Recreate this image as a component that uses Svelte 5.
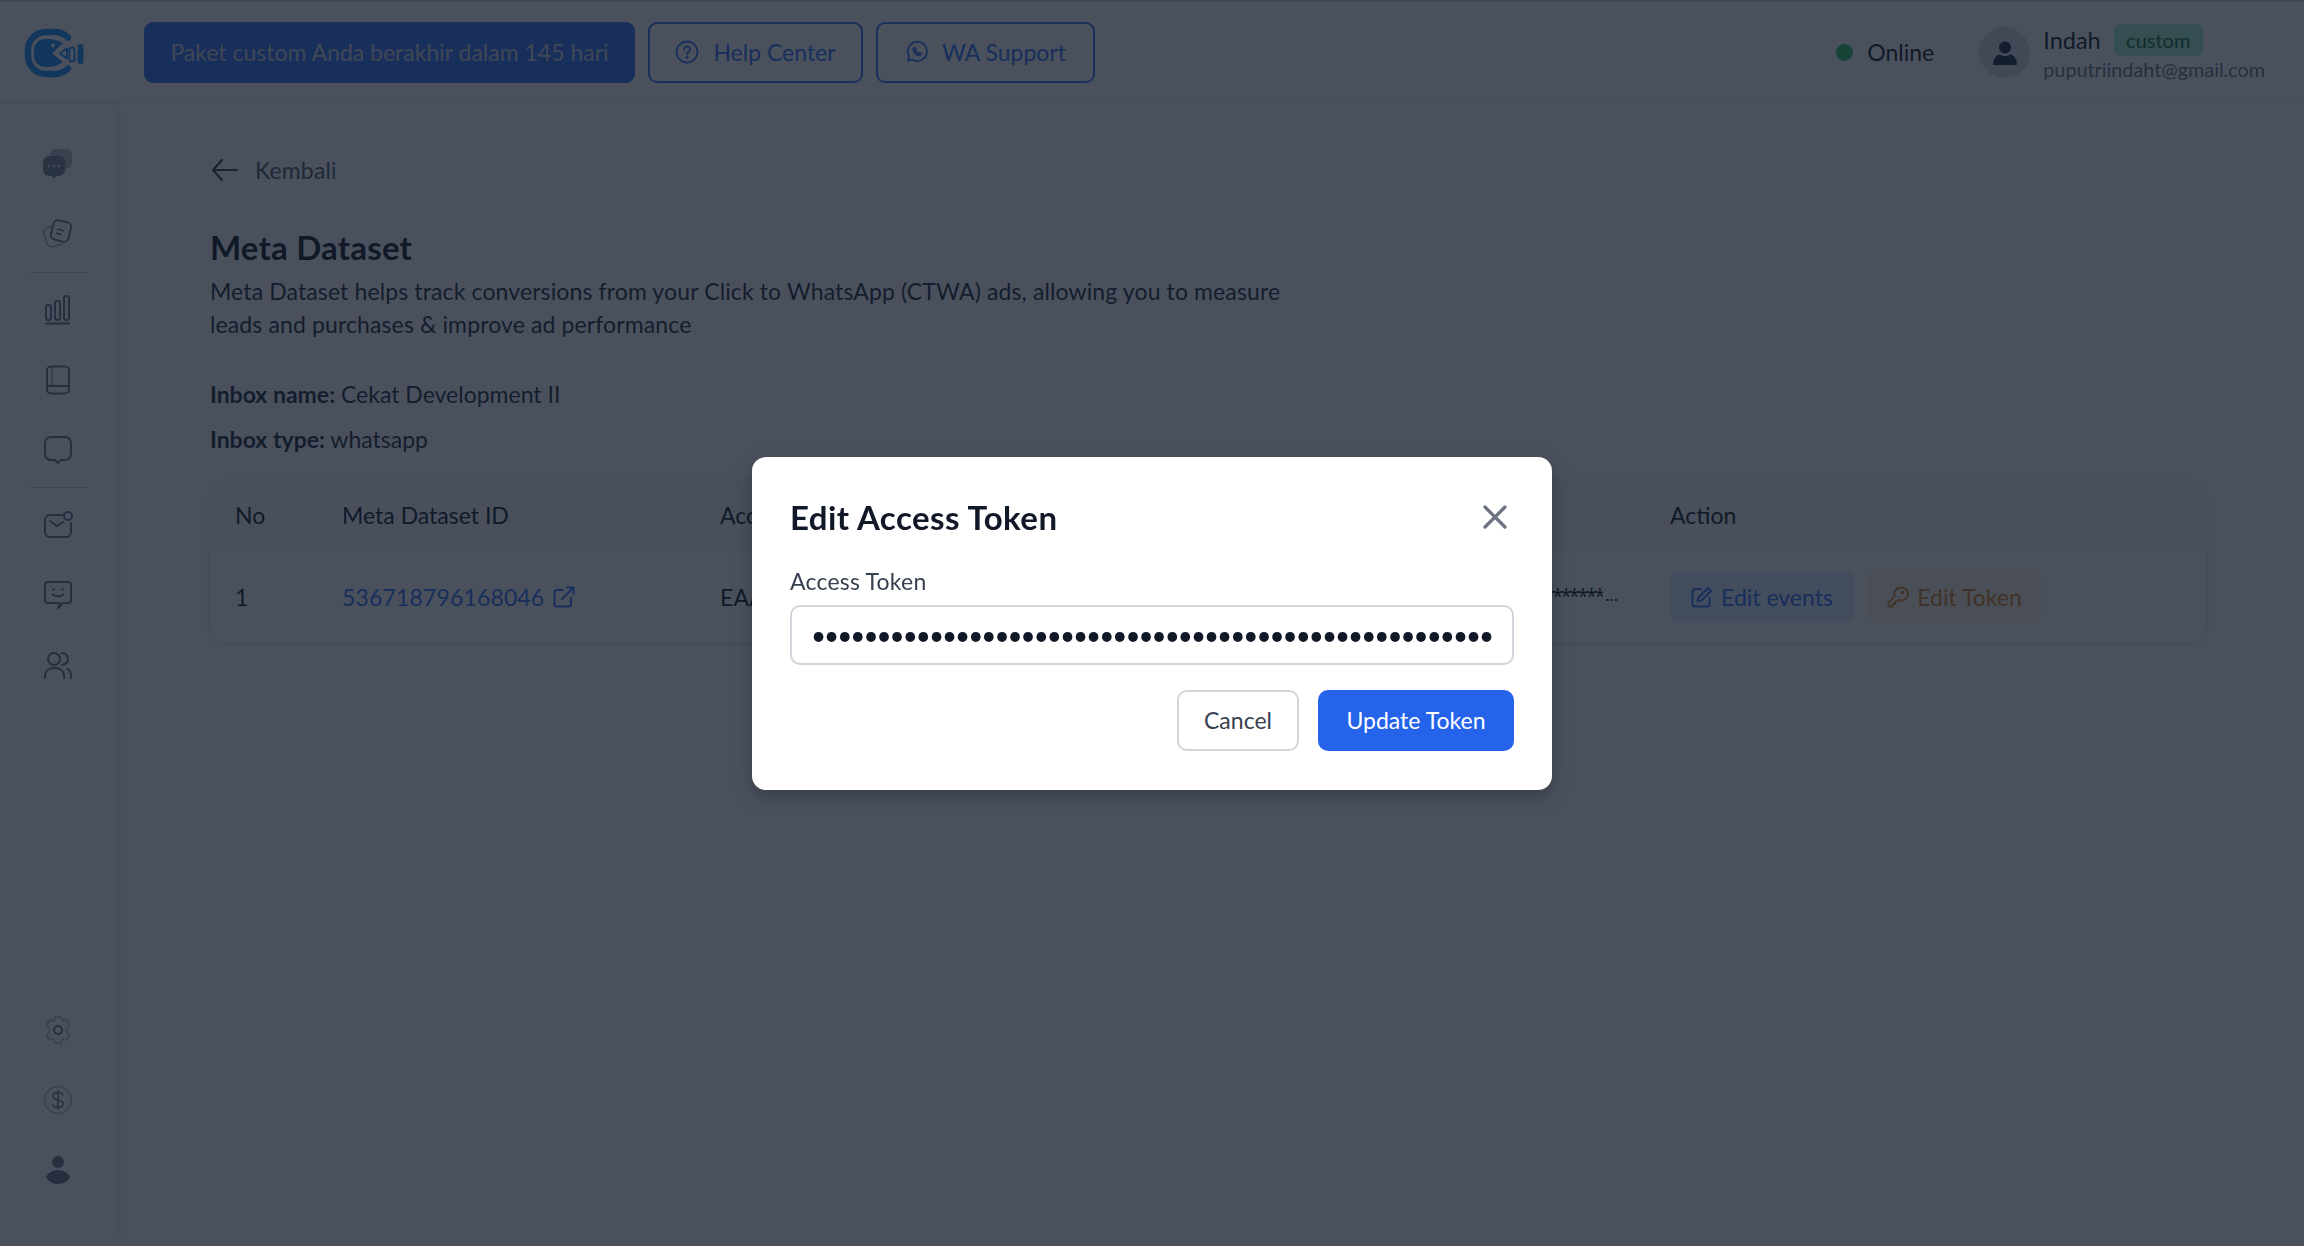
<script>
  let token = "EAAGm0PX4ZCpsBO7ZBqkZCZA1xLwT9dJrQ8vNfYh2KsUe6MtcWiPoD3lGn";
</script>

<div class="page">
  <header class="topbar">
    <div class="logo">
      <svg width="60" height="50" viewBox="0 0 60 50">
        <path d="M44 9.500A21 21 0 0 0 27 4H22A18 18 0 0 0 4 22V28A18 18 0 0 0 22 46H27A21 21 0 0 0 44 40.500" fill="none" stroke="#1c8fff" stroke-width="6.500" stroke-linecap="round" />
        <path d="M24 11H21A11 11 0 0 0 10 22V28A11 11 0 0 0 21 39H24C30 39 35 37 39 34L28 25.500L39 15C35 13 30 11 24 11z" fill="#1c8fff" />
        <circle cx="29" cy="17.500" r="2" fill="#fff" />
        <path d="M36 25.500L43 20.500V30.500z" fill="none" stroke="#1c8fff" stroke-width="2" stroke-linejoin="round" />
        <rect x="45.500" y="19.500" width="5" height="14" rx="2.500" fill="none" stroke="#1c8fff" stroke-width="2" />
        <rect x="53.500" y="16" width="6" height="20" rx="3" fill="#1c8fff" />
      </svg>
    </div>
    <div class="topbar-actions">
      <button class="btn solid">Paket custom Anda berakhir dalam 145 hari</button>
      <button class="btn outline help">
        <svg width="24" height="24" viewBox="0 0 24 24" fill="none" stroke="currentColor" stroke-width="1.800" stroke-linecap="round">
          <circle cx="12" cy="12" r="10.500" />
          <path d="M9 9.500a3 3 0 1 1 4.500 2.600c-1 .6-1.500 1.200-1.500 2.200" />
          <circle cx="12" cy="17.300" r=".6" />
        </svg>
        Help Center
      </button>
      <button class="btn outline wa">
        <svg width="23" height="24" viewBox="0 0 24 24" fill="none" stroke="currentColor" stroke-width="1.800" stroke-linecap="round" stroke-linejoin="round">
          <path d="M3 21l1.400-4.500A10 10 0 1 1 8 20z" />
          <path d="M8.500 8.500c0 4 3 7 7 7l1.200-1.800-2.500-1.200-1 1c-1.200-.5-2-1.300-2.500-2.500l1-1-1.200-2.500z" />
        </svg>
        WA Support
      </button>
    </div>
    <div class="status">
      <span class="dot"></span>
      <span>Online</span>
    </div>
    <div class="user">
      <div class="avatar">
        <svg width="26" height="26" viewBox="0 0 26 26" fill="#1f2937">
          <circle cx="13" cy="7.500" r="6" />
          <path d="M1 25c0-7 4-10.500 7-10.500 1.500 1 3 1.500 5 1.500s3.500-.5 5-1.500c3 0 7 3.500 7 10.500z" />
        </svg>
      </div>
      <div class="user-info">
        <div class="user-line">
          <span class="user-name">Indah</span>
          <span class="badge">custom</span>
        </div>
        <div class="user-email">puputriindaht@gmail.com</div>
      </div>
    </div>
  </header>

  <div class="body">
    <aside class="sidebar">
      <div class="nav">
        <div class="nav-item">
          <svg width="30" height="30" viewBox="0 0 30 30">
            <rect x="7" y="0" width="22" height="20" rx="6" fill="#b8bcc4" />
            <rect x="0" y="7" width="22" height="20" rx="6" fill="#7b8290" />
            <path d="M8 26h6l-3 3.500z" fill="#7b8290" />
            <circle cx="6" cy="17" r="1.200" fill="#e5e7eb" />
            <circle cx="11" cy="17" r="1.200" fill="#e5e7eb" />
            <circle cx="16" cy="17" r="1.200" fill="#e5e7eb" />
          </svg>
        </div>
        <div class="nav-item">
          <svg width="30" height="30" viewBox="0 0 30 30" fill="none" stroke-width="1.800">
            <rect x="2" y="7" width="18" height="20" rx="6" transform="rotate(-15 11 17)" stroke="#b8bcc4" />
            <rect x="9" y="2" width="18" height="20" rx="5" transform="rotate(14 18 12)" stroke="#6b7280" fill="#fff" />
            <path d="M14 10l7 1.800M13 14l5 1.300" stroke="#6b7280" />
          </svg>
        </div>
        <hr class="nav-sep" />
        <div class="nav-item">
          <svg width="28" height="30" viewBox="0 0 28 30" fill="none" stroke="#6b7280" stroke-width="2">
            <rect x="2" y="10" width="5" height="15" rx="2" />
            <rect x="11" y="6" width="5" height="19" rx="2" />
            <rect x="20" y="1" width="5" height="24" rx="2" />
            <path d="M1 28.500h25" stroke-width="2.200" />
          </svg>
        </div>
        <div class="nav-item">
          <svg width="26" height="30" viewBox="0 0 26 30" fill="none" stroke="#6b7280" stroke-width="2">
            <rect x="2" y="1.500" width="22" height="27" rx="4" />
            <path d="M2 21h22" />
            <path d="M7 2v19" stroke-width="1" />
          </svg>
        </div>
        <div class="nav-item">
          <svg width="30" height="30" viewBox="0 0 30 30" fill="none" stroke="#6b7280" stroke-width="2">
            <path d="M8 2h14a6 6 0 0 1 6 6v11a6 6 0 0 1-6 6h-4l-3 3-3-3H8a6 6 0 0 1-6-6V8a6 6 0 0 1 6-6z" />
          </svg>
        </div>
        <hr class="nav-sep narrow" />
        <div class="nav-item">
          <svg width="30" height="28" viewBox="0 0 30 28" fill="none" stroke="#6b7280" stroke-width="2" stroke-linecap="round">
            <path d="M20 4H7a5 5 0 0 0-5 5v12a5 5 0 0 0 5 5h16a5 5 0 0 0 5-5v-9" />
            <path d="M7 10l7 5 6-4" />
            <circle cx="25" cy="5" r="4" />
          </svg>
        </div>
        <div class="nav-item">
          <svg width="30" height="30" viewBox="0 0 30 30" fill="none" stroke="#6b7280" stroke-width="2" stroke-linecap="round" stroke-linejoin="round">
            <path d="M15 23H5a3 3 0 0 1-3-3V5a3 3 0 0 1 3-3h20a3 3 0 0 1 3 3v15a3 3 0 0 1-3 3h-5l-5 5 2-5" />
            <circle cx="10.500" cy="9.500" r="1.300" fill="#6b7280" stroke="none" />
            <circle cx="19.500" cy="9.500" r="1.300" fill="#6b7280" stroke="none" />
            <path d="M9.500 14.500c3 2.500 8 2.500 11 0" />
          </svg>
        </div>
        <div class="nav-item">
          <svg width="30" height="28" viewBox="0 0 30 28" fill="none" stroke="#6b7280" stroke-width="2" stroke-linecap="round">
            <circle cx="11" cy="8" r="6" />
            <path d="M2 27v-2a8 8 0 0 1 8-8h3a8 8 0 0 1 8 8v2" />
            <path d="M19 2a6 6 0 0 1 0 12" />
            <path d="M24 17.500a8 8 0 0 1 4 7V27" />
          </svg>
        </div>
      </div>
      <div class="nav">
        <div class="nav-item">
          <svg width="28" height="30" viewBox="0 0 28 30" fill="none" stroke="#b8bcc4" stroke-width="1.700">
            <path d="M11 2h6l1.500 4 4-1 3 5-3 3.500v3l3 3.500-3 5-4-1-1.500 4h-6l-1.500-4-4 1-3-5 3-3.500v-3l-3-3.500 3-5 4 1z" stroke-linejoin="round" />
            <circle cx="14" cy="15" r="4" stroke="#6b7280" stroke-width="2" />
          </svg>
        </div>
        <div class="nav-item">
          <svg width="30" height="30" viewBox="0 0 30 30" fill="none" stroke-width="1.500">
            <circle cx="15" cy="15" r="13.500" stroke="#b8bcc4" />
            <path d="M20 10.500c-.5-2-2.500-3-5-3s-5 1.300-5 3.700 2.300 3.200 5 3.800 5.300 1.400 5.300 3.800-2.500 3.700-5.300 3.700-4.800-1.200-5.300-3.200M15 5v20" stroke="#6b7280" />
          </svg>
        </div>
        <div class="nav-item">
          <svg width="24" height="29" viewBox="0 0 24 29" fill="#6b7280">
            <circle cx="12" cy="6" r="6" />
            <path d="M12 14c6 0 10 3 12 7-2 4-6 7-12 7S2 25 0 21c2-4 6-7 12-7z" />
          </svg>
        </div>
      </div>
    </aside>

    <main class="content">
      <div class="back">
        <svg width="28" height="24" viewBox="0 0 28 24" fill="none" stroke="#374151" stroke-width="2.200" stroke-linecap="round" stroke-linejoin="round">
          <path d="M26 12H2M11 2L2 12l9 10" />
        </svg>
        <span>Kembali</span>
      </div>
      <h1>Meta Dataset</h1>
      <p class="desc">Meta Dataset helps track conversions from your Click to WhatsApp (CTWA) ads, allowing you to measure leads and purchases &amp; improve ad performance</p>
      <p class="meta"><b>Inbox name:</b> Cekat Development II</p>
      <p class="meta"><b>Inbox type:</b> whatsapp</p>

      <div class="table-card">
        <div class="row head">
          <div class="col-no">No</div>
          <div class="col-id">Meta Dataset ID</div>
          <div class="col-token">Access Token</div>
          <div class="col-action">Action</div>
        </div>
        <div class="row">
          <div class="col-no">1</div>
          <div class="col-id link">
            536718796168046
            <svg width="22" height="22" viewBox="0 0 22 22" fill="none" stroke="currentColor" stroke-width="2" stroke-linecap="round" stroke-linejoin="round">
              <path d="M10 4H4a2.500 2.500 0 0 0-2.500 2.500V18A2.500 2.500 0 0 0 4 20.500h11.500A2.500 2.500 0 0 0 18 18v-6" />
              <path d="M9 13L20.500 1.500M14 1.500h6.500V8" />
            </svg>
          </div>
          <div class="col-token masked">
            <span class="prefix">EAAGm0PX4ZCp</span>
            <span class="stars"><span>***********************************************************************</span></span>
            <span class="more">...</span>
          </div>
          <div class="col-action actions">
            <button class="tag blue">
              <svg width="22" height="22" viewBox="0 0 22 22" fill="none" stroke="currentColor" stroke-width="2" stroke-linecap="round" stroke-linejoin="round">
                <path d="M10 3H4a2.500 2.500 0 0 0-2.500 2.500V18A2.500 2.500 0 0 0 4 20.500h12a2.500 2.500 0 0 0 2.500-2.500v-6" />
                <path d="M17 2l3 3-9.500 9.500-4 1 1-4z" />
              </svg>
              Edit events
            </button>
            <button class="tag amber">
              <svg width="22" height="22" viewBox="0 0 22 22" fill="none" stroke="currentColor" stroke-width="1.800" stroke-linecap="round" stroke-linejoin="round">
                <path d="M14 1.500a6.500 6.500 0 0 0-6.200 8.400L1.500 16.500v4h4v-2.500h2.500v-2.500h2l1.700-1.600A6.500 6.500 0 1 0 14 1.500z" />
                <circle cx="15.500" cy="6.500" r=".8" />
              </svg>
              Edit Token
            </button>
          </div>
        </div>
      </div>
    </main>
  </div>
</div>

<div class="overlay">
  <div class="modal">
    <div class="modal-head">
      <h2>Edit Access Token</h2>
      <button class="close" aria-label="Close">
        <svg width="24" height="24" viewBox="0 0 24 24" fill="none" stroke="#6b7280" stroke-width="3.200" stroke-linecap="round">
          <path d="M2 2l20 20M22 2L2 22" />
        </svg>
      </button>
    </div>
    <label for="token">Access Token</label>
    <input id="token" type="password" readonly value={token} />
    <div class="modal-actions">
      <button class="cancel">Cancel</button>
      <button class="update">Update Token</button>
    </div>
  </div>
</div>

<style>
  :global(body) {
    background: #fff;
    font-family: Lato, "Noto Sans", sans-serif;
    color: #1f2937;
  }

  button {
    font-family: inherit;
  }

  .page {
    height: 100vh;
    display: flex;
    flex-direction: column;
    overflow: hidden;
  }

  .topbar {
    height: 104px;
    flex-shrink: 0;
    display: flex;
    align-items: center;
    padding: 0 39px 0 24px;
    border-top: 2px solid #d1d5db;
    border-bottom: 1px solid #eef0f3;
    box-sizing: border-box;
  }

  .logo {
    display: flex;
    width: 120px;
    flex-shrink: 0;
  }

  .topbar-actions {
    display: flex;
    gap: 13px;
    flex: 1;
  }

  .btn {
    height: 61px;
    box-sizing: border-box;
    border-radius: 9px;
    font-size: 23px;
    display: flex;
    align-items: center;
    gap: 14px;
    background: none;
    padding-bottom: 2px;
  }

  .solid {
    width: 491px;
    justify-content: center;
    background: #2f6ff5;
    border: none;
    color: #d1d5db;
  }

  .outline {
    border: 2px solid #2f6ff5;
    color: #2f6ff5;
    justify-content: center;
  }

  .help {
    width: 215px;
  }

  .wa {
    width: 219px;
  }

  .status {
    display: flex;
    align-items: center;
    gap: 14px;
    font-size: 23px;
    color: #111827;
    margin-right: 45px;
    padding-bottom: 1px;
  }

  .dot {
    width: 17px;
    height: 17px;
    border-radius: 50%;
    background: #22c55e;
  }

  .user {
    display: flex;
    align-items: center;
    gap: 13px;
  }

  .avatar {
    width: 51px;
    height: 51px;
    border-radius: 50%;
    background: #d8dbe0;
    display: flex;
    align-items: center;
    justify-content: center;
  }

  .user-line {
    display: flex;
    align-items: center;
    gap: 13px;
    height: 32px;
  }

  .user-name {
    font-size: 23.500px;
    color: #111827;
  }

  .badge {
    width: 89px;
    height: 32px;
    line-height: 32px;
    text-align: center;
    border-radius: 6px;
    background: #a7f3d0;
    color: #166534;
    font-size: 20px;
  }

  .user-email {
    font-size: 19.800px;
    color: #6b7280;
    margin-top: 1px;
  }

  .body {
    flex: 1;
    display: flex;
    min-height: 0;
  }

  .sidebar {
    width: 115px;
    flex-shrink: 0;
    display: flex;
    flex-direction: column;
    justify-content: space-between;
    padding: 25px 0 41px;
    box-sizing: border-box;
    box-shadow: 3px 0 14px rgba(17, 24, 39, 0.08);
  }

  .nav {
    display: flex;
    flex-direction: column;
    align-items: center;
  }

  .nav-item {
    height: 70px;
    display: flex;
    align-items: center;
    justify-content: center;
  }

  .nav-sep {
    width: 60px;
    border: none;
    border-top: 1px solid #d1d5db;
    margin: 3px 0 2px;
  }

  .nav-sep.narrow {
    margin: 2px 0 2px;
  }

  .content {
    flex: 1;
    padding: 50px 98px 0 95px;
    min-width: 0;
  }

  .back {
    display: flex;
    align-items: center;
    gap: 16px;
    font-size: 23px;
    letter-spacing: 0.15px;
    color: #4b5563;
    height: 32px;
  }

  .back svg {
    margin-left: 1px;
  }

  h1 {
    font-size: 33px;
    letter-spacing: 0.2px;
    font-weight: 700;
    color: #111827;
    margin: 39px 0 6px;
    line-height: 44px;
  }

  .desc {
    font-size: 23px;
    letter-spacing: 0.12px;
    line-height: 33px;
    width: 1100px;
    margin: 0 0 37px;
    color: #1f2937;
  }

  .meta {
    font-size: 23px;
    line-height: 33px;
    margin: 0 0 12px;
    color: #1f2937;
  }

  .meta b {
    font-weight: 700;
  }

  .table-card {
    margin-top: 24px;
    border-radius: 16px;
    box-shadow: 0 2px 8px rgba(17, 24, 39, 0.14);
    overflow: hidden;
  }

  .row {
    display: flex;
    align-items: center;
    height: 91px;
    font-size: 23px;
    letter-spacing: 0.15px;
    color: #111827;
  }

  .row.head {
    height: 70px;
    background: #f9fafb;
    border-bottom: 1px solid #f3f4f6;
    letter-spacing: 0;
  }

  .col-no {
    width: 132px;
    padding-left: 25px;
    box-sizing: border-box;
  }

  .col-id {
    width: 378px;
    display: flex;
    align-items: center;
    gap: 9px;
  }

  .link {
    color: #2f6ff5;
  }

  .col-token {
    width: 950px;
    box-sizing: border-box;
  }

  .masked {
    display: flex;
    padding-right: 52px;
    white-space: nowrap;
  }

  .stars {
    flex: 1;
    display: flex;
    justify-content: flex-end;
    overflow: hidden;
    font-family: "Noto Sans", sans-serif;
    font-size: 19px;
    letter-spacing: -2px;
  }

  .more {
    font-size: 18px;
    margin-left: 2px;
    letter-spacing: 0;
  }

  .actions {
    display: flex;
    gap: 13px;
  }

  .tag {
    height: 51px;
    display: flex;
    align-items: center;
    justify-content: center;
    gap: 8px;
    border: none;
    border-radius: 8px;
    font-size: 23px;
  }

  .blue {
    width: 184px;
    background: #e0edfd;
    color: #2f6ff5;
  }

  .amber {
    width: 175px;
    background: #fff4e6;
    color: #d97f20;
  }

  .overlay {
    position: fixed;
    inset: 0;
    background: rgba(17, 26, 42, 0.76);
    display: flex;
    align-items: center;
    justify-content: center;
  }

  .modal {
    width: 800px;
    height: 333px;
    box-sizing: border-box;
    background: #fff;
    border-radius: 14px;
    padding: 38px;
    display: flex;
    flex-direction: column;
    box-shadow: 0 6px 20px rgba(0, 0, 0, 0.25);
  }

  .modal-head {
    display: flex;
    align-items: center;
    justify-content: space-between;
    height: 44px;
    padding-right: 7px;
  }

  h2 {
    margin: 0;
    font-size: 33px;
    letter-spacing: 0.45px;
    font-weight: 700;
    color: #111827;
  }

  .close {
    background: none;
    border: none;
    padding: 0;
    display: flex;
  }

  label {
    font-size: 23px;
    letter-spacing: 0.22px;
    color: #374151;
    margin-top: 28px;
    line-height: 28px;
  }

  input {
    margin-top: 10px;
    height: 60px;
    box-sizing: border-box;
    border: 2px solid #d1d5db;
    border-radius: 10px;
    padding: 0 19px;
    font-size: 26px;
    letter-spacing: -1.980px;
    color: #111827;
    outline: none;
    font-family: inherit;
  }

  .modal-actions {
    display: flex;
    justify-content: flex-end;
    gap: 19px;
    margin-top: 25px;
  }

  .modal-actions button {
    height: 61px;
    border-radius: 10px;
    font-size: 23px;
    box-sizing: border-box;
  }

  .cancel {
    width: 122px;
    border: 2px solid #d1d5db;
    background: #fff;
    color: #374151;
  }

  .update {
    width: 196px;
    border: none;
    background: #2563eb;
    color: #fff;
  }
</style>
